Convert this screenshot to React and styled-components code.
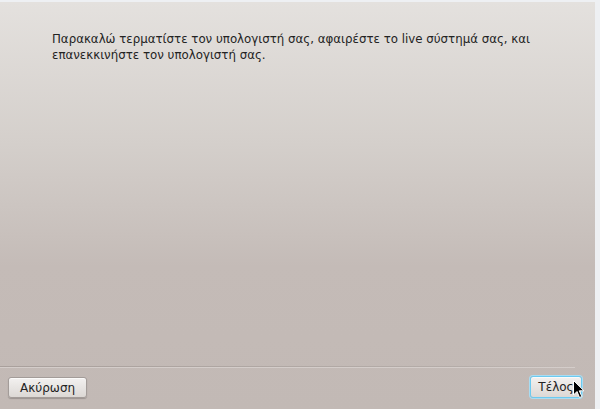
import React from "react";
import styled, { createGlobalStyle } from "styled-components";

const GlobalStyle = createGlobalStyle`
  html, body {
    margin: 0;
    padding: 0;
    background: #eef0f3;
    overflow: hidden;
  }
  #root {
    width: 600px;
    height: 409px;
  }
`;

const Screen = styled.div`
  width: 600px;
  height: 409px;
  padding: 2px 5px 0 0;
  box-sizing: border-box;
  background: #eef0f3;
  display: flex;
`;

const Dialog = styled.div`
  flex: 1;
  display: flex;
  flex-direction: column;
  background: linear-gradient(to bottom, #e4e1de 0%, #d4cfcb 35%, #c4bbb7 65%, #c2b9b5 100%);
  font-family: "DejaVu Sans", "Liberation Sans", sans-serif;
  color: #232323;
`;

const Body = styled.div`
  flex: 1;
  padding: 29px 20px 0 52px;
  font-size: 11.8px;
  line-height: 16px;
`;

const Separator = styled.div`
  height: 1px;
  margin: 0 20px 0 0;
  background: linear-gradient(to right, #a9a09c, #b4aca8 80%, rgba(180, 172, 168, 0));
  border-bottom: 1px solid #d4cdca;
`;

const Footer = styled.div`
  height: 41px;
  display: flex;
  align-items: flex-start;
  justify-content: space-between;
  padding: 8px 13px 0 8px;
  box-sizing: border-box;
  position: relative;
`;

const Button = styled.button`
  height: ${(p) => (p.$focus ? "22px" : "21px")};
  padding: 0 ${(p) => (p.$focus ? "7px" : "11px")};
  min-width: 52px;
  font-family: "DejaVu Sans", "Liberation Sans", sans-serif;
  font-size: 12px;
  color: #232323;
  border-radius: 3px;
  border: 1px solid ${(p) => (p.$focus ? "#6ccaf0" : "#a39c99")};
  box-shadow: ${(p) =>
    p.$focus
      ? "0 0 0 1px #a9dcf2, inset 0 1px 0 #fbfaf9"
      : "0 1px 1px rgba(0,0,0,0.2), inset 0 1px 0 #fbfaf9"};
  background: linear-gradient(to bottom, #f3f1f0, #dcd8d5);
  margin-top: ${(p) => (p.$focus ? "0" : "1px")};
`;

const Cursor = styled.svg`
  position: absolute;
  left: 573px;
  top: 12px;
`;

export default function App() {
  return (
    <>
      <GlobalStyle />
      <Screen>
        <Dialog>
          <Body>
            Παρακαλώ τερματίστε τον υπολογιστή σας, αφαιρέστε το live σύστημά σας, και
            <br />
            επανεκκινήστε τον υπολογιστή σας.
          </Body>
          <Separator />
          <Footer>
            <Button>Ακύρωση</Button>
            <Button $focus>Τέλος</Button>
            <Cursor width="12" height="19" viewBox="0 0 12 19">
              <path d="M0.5 0.5 L0.5 15 L4 11.5 L6.5 17.5 L8.8 16.5 L6.3 10.8 L11 10.8 Z" fill="#000" stroke="#fff" strokeWidth="1" />
            </Cursor>
          </Footer>
        </Dialog>
      </Screen>
    </>
  );
}
